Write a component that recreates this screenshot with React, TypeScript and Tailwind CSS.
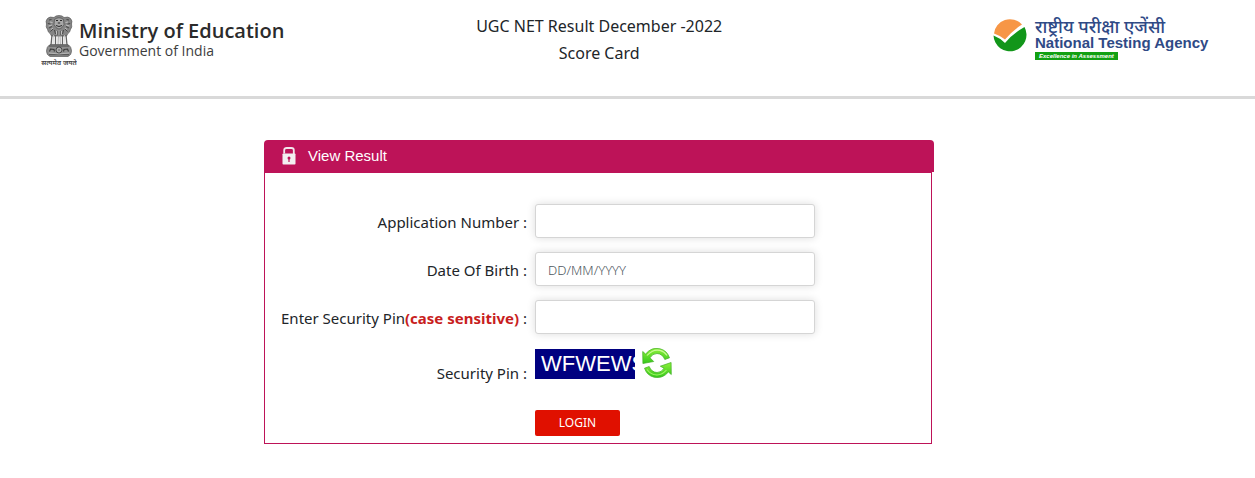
import { useState } from 'react';
import type { FormEvent, ReactNode } from 'react';

interface FieldRowProps {
  id: string;
  label: ReactNode;
  placeholder?: string;
  value: string;
  onChange: (value: string) => void;
}

function FieldRow({ id, label, placeholder, value, onChange }: FieldRowProps) {
  return (
    <>
      <label htmlFor={id} className="pt-0.5 text-right">
        {label}
      </label>
      <input
        id={id}
        type="text"
        autoComplete="off"
        placeholder={placeholder}
        value={value}
        onChange={(e) => onChange(e.target.value)}
        className="h-[34px] w-full max-w-[280px] rounded-[3px] border border-[#d5d5d5] bg-white px-3 pt-0.5 text-[13px] font-light text-[#495057] shadow-[0_0_8px_rgba(0,0,0,0.14)] outline-none placeholder:text-[#4c555d] focus:border-[#bd1358]"
      />
    </>
  );
}

function Emblem() {
  return (
    <svg viewBox="0 0 36 52" className="h-[52px] w-9 shrink-0" role="img" aria-label="State Emblem of India">
      {/* lions */}
      <path
        d="M13 2.5 Q14.5 0.5 18 0.5 Q21.5 0.5 23 2.5 Q27.5 1.2 29.5 3.5 Q31.8 6 30.5 9 Q31.5 12 29.5 14.5 Q29 17.5 26.5 19 L25.5 21 H10.5 L9.5 19 Q7 17.5 6.5 14.5 Q4.5 12 5.5 9 Q4.2 6 6.5 3.5 Q8.5 1.2 13 2.5 Z"
        fill="#858585"
        stroke="#5a5a5a"
        strokeWidth="0.7"
      />
      <path d="M13.5 4.5 Q18 1 22.5 4.5 L23 9.5 Q21.5 13.5 18 14 Q14.5 13.5 13 9.5 Z" fill="#a8a8a8" stroke="#4c4c4c" strokeWidth="0.7" />
      <path d="M15 5.5 H17 M19 5.5 H21 M16.8 8 H19.2 M15 10.5 Q18 12.5 21 10.5" stroke="#2a2a2a" strokeWidth="1" fill="none" />
      <path
        d="M8 5 L10.5 4.5 M6.8 8.5 L9.5 9 M8 13 L11 11.5 M9.5 16.5 L12 14 M28 5 L25.5 4.5 M29.2 8.5 L26.5 9 M28 13 L25 11.5 M26.5 16.5 L24 14 M13.5 15 L14.5 19 M17 16 V20 M19 16 V20 M22.5 15 L21.5 19"
        stroke="#404040"
        strokeWidth="0.9"
        fill="none"
      />
      <path
        d="M9 7 L11.5 7.5 M7.5 11 L11 10 M10 14.5 L12 13 M27 7 L24.5 7.5 M28.5 11 L25 10 M26 14.5 L24 13 M15.5 16 V19.5 M18 15.5 V20 M20.5 16 V19.5"
        stroke="#d0d0d0"
        strokeWidth="0.8"
      />
      {/* legs */}
      <path d="M11 20 L10 30 M14.5 20 V30 M21.5 20 V30 M25 20 L26 30" stroke="#636363" strokeWidth="1.3" />
      <path d="M17.3 20 L17 30 M19 20 L19.3 30" stroke="#8a8a8a" strokeWidth="0.8" />
      <path d="M12.5 20 L12 29 M23.5 20 L24 29" stroke="#c8c8c8" strokeWidth="0.8" />
      {/* abacus with the wheel */}
      <path d="M9 29.5 H27 Q30.5 31.5 30.5 36 Q30.5 40 27 41.5 H9 Q5.5 40 5.5 36 Q5.5 31.5 9 29.5 Z" fill="#8f8f8f" stroke="#5a5a5a" strokeWidth="0.7" />
      <path d="M8 31 H28 M8 39.8 H28" stroke="#4a4a4a" strokeWidth="1.1" />
      <path d="M8 38 Q18 40 28 38" stroke="#c4c4c4" strokeWidth="0.7" fill="none" />
      <circle cx="18" cy="35" r="3" fill="#c2c2c2" stroke="#3f3f3f" strokeWidth="0.9" />
      <path d="M18 32.3 V37.7 M15.3 35 H20.7 M16.1 33.1 L19.9 36.9 M19.9 33.1 L16.1 36.9" stroke="#666" strokeWidth="0.4" />
      <path d="M8.5 36.5 L9.5 34 L13 34.5 L13.5 36.5 M27.5 36.5 L26.5 34 L23 34.5 L22.5 36.5" stroke="#3a3a3a" strokeWidth="1.1" fill="none" />
      <text
        x="18"
        y="50"
        textAnchor="middle"
        fontSize="7"
        fontWeight="600"
        fill="#444"
        fontFamily="'Noto Sans', 'Noto Sans Devanagari', sans-serif"
      >
        सत्यमेव जयते
      </text>
    </svg>
  );
}

function NtaMark() {
  return (
    <svg viewBox="0 0 34 34" className="h-[34px] w-[34px] shrink-0" aria-hidden="true">
      <path d="M1 15.5 A16 15.5 0 0 1 29 6.5 Q20 12 12 21.5 Q7 17.5 1 15.5 Z" fill="#f79646" />
      <path d="M0.5 17.5 Q7 20 12 25 Q20 15.5 31.5 9 A16.5 16.5 0 1 1 0.5 17.5 Z" fill="#12961a" />
    </svg>
  );
}

function LockIcon() {
  return (
    <svg viewBox="0 0 14 18" className="h-[18px] w-3.5" aria-hidden="true">
      <path d="M2.2 6.5 V3 Q2.2 1 4.7 1 H9.3 Q11.8 1 11.8 3 V7" fill="none" stroke="#f3e6ec" strokeWidth="1.8" />
      <rect x="0.5" y="6.5" width="13" height="11" rx="0.8" fill="#f3eff1" />
      <circle cx="7" cy="11" r="1.5" fill="#bd1358" />
      <path d="M6.4 11.5 H7.6 V15 H6.4 Z" fill="#bd1358" />
    </svg>
  );
}

function RefreshIcon() {
  return (
    <svg viewBox="0 0 30 30" className="h-[30px] w-[30px]" aria-hidden="true">
      <defs>
        <linearGradient id="leaf" x1="0" y1="0" x2="0" y2="1">
          <stop offset="0" stopColor="#8df03a" />
          <stop offset="1" stopColor="#35c81c" />
        </linearGradient>
      </defs>
      <g stroke="#3fae22" strokeWidth="0.7" strokeLinejoin="round">
        <path d="M0.7 3.5 L3.6 6 Q9.5 -1.2 18 0.8 Q25 2.5 27.5 9.8 L22.8 11.5 Q20.5 5.8 15 5.5 Q10.5 5.5 8 9.8 L11.7 13.5 L0.9 15.5 Z" fill="url(#leaf)" />
        <path d="M29.3 26.5 L26.4 24 Q20.5 31 12 29.2 Q5 27.5 2.5 20.2 L7.2 18.5 Q9.5 24.2 15 24.5 Q19.5 24.5 22 20.2 L18.3 18.2 L29.1 14.5 Z" fill="url(#leaf)" />
      </g>
      <path d="M5 7.5 Q11 0.8 18 2.4 Q22.5 3.6 25 7.5" fill="none" stroke="#c9fb96" strokeWidth="1.1" />
      <path d="M5 21.5 Q9 27 15 27 Q20 27 24.5 22" fill="none" stroke="#a5f56b" strokeWidth="1.1" />
    </svg>
  );
}

export default function App() {
  const [applicationNumber, setApplicationNumber] = useState('');
  const [dateOfBirth, setDateOfBirth] = useState('');
  const [securityPin, setSecurityPin] = useState('');

  const handleSubmit = (e: FormEvent) => {
    e.preventDefault();
  };

  return (
    <div className="bg-white font-['Noto_Sans','Open_Sans',sans-serif] text-[#212529]">
      <header className="grid grid-cols-[438fr_240fr_494fr] items-start border-b-3 border-[#d9d9d9] pt-[13px] pr-[42px] pb-[29px] pl-[41px]">
        <div className="flex pt-0.5">
          <Emblem />
          <div className="pt-1 pl-0.5 font-['Open_Sans',sans-serif] whitespace-nowrap">
            <p className="text-xl leading-6 font-semibold text-[#2b2b2b]">Ministry of Education</p>
            <p className="text-sm leading-4 text-[#3d3d3d]">Government of India</p>
          </div>
        </div>

        <h1 className="flex flex-col items-center text-base leading-[27px] font-normal whitespace-nowrap">
          <span>UGC NET Result December -2022</span>
          <span>Score Card</span>
        </h1>

        <div className="flex items-start justify-end gap-2 pt-[5px]">
          <NtaMark />
          <div className="w-[178px] font-['Liberation_Sans',sans-serif] whitespace-nowrap text-[#2f4a86]">
            <p className="font-['Noto_Sans','Noto_Sans_Devanagari',sans-serif] text-lg leading-4 font-medium">
              राष्ट्रीय परीक्षा एजेंसी
            </p>
            <p className="text-[15px] leading-[18px] font-bold">National Testing Agency</p>
            <p className="w-fit bg-[#12a012] px-1 text-[6px] leading-2 font-bold text-white italic">
              Excellence in Assessment
            </p>
          </div>
        </div>
      </header>

      <main className="pt-[41px] pr-[57px] pb-8">
        <section className="mx-auto w-full max-w-[670px]">
          <h2 className="flex h-8 items-center gap-3 rounded-t bg-[#bd1358] pl-[18px] font-['Liberation_Sans',sans-serif] text-[15px] text-white">
            <LockIcon />
            View Result
          </h2>

          <form
            onSubmit={handleSubmit}
            className="mr-0.5 grid grid-cols-[262px_1fr] items-center gap-x-2 gap-y-3.5 border border-[#bd1358] pt-[31px] pb-[7px] text-[15px]"
          >
            <FieldRow
              id="application-number"
              label="Application Number :"
              value={applicationNumber}
              onChange={setApplicationNumber}
            />
            <FieldRow
              id="date-of-birth"
              label="Date Of Birth :"
              placeholder="DD/MM/YYYY"
              value={dateOfBirth}
              onChange={setDateOfBirth}
            />
            <FieldRow
              id="security-pin"
              label={
                <>
                  Enter Security Pin<b className="text-[#c81e1e]">(case sensitive)</b> :
                </>
              }
              value={securityPin}
              onChange={setSecurityPin}
            />

            <span className="pt-0.5 text-right">Security Pin :</span>
            <div className="flex h-12 items-start gap-[7px]">
              <div className="mt-px h-[30px] w-[100px] overflow-hidden bg-[#000080] pl-1.5 font-['Liberation_Sans',sans-serif] text-[22px] leading-[30px] text-white">
                WFWEWS
              </div>
              <button type="button" aria-label="Refresh security pin" className="cursor-pointer">
                <RefreshIcon />
              </button>
            </div>

            <button
              type="submit"
              className="col-start-2 h-[26px] w-[85px] cursor-pointer rounded-xs bg-[#e01000] text-xs text-white"
            >
              LOGIN
            </button>
          </form>
        </section>
      </main>
    </div>
  );
}
